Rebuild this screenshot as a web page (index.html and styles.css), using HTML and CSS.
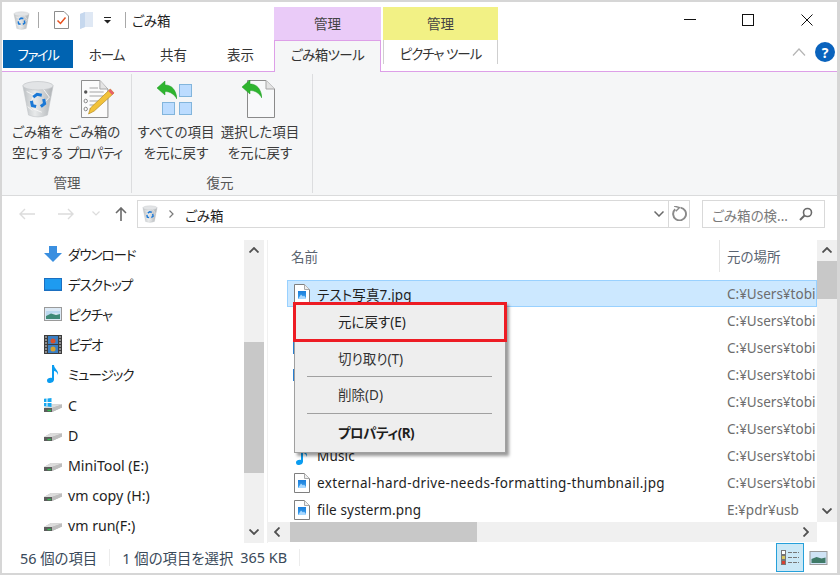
FILE: index.html
```html
<!DOCTYPE html>
<html lang="ja">
<head>
<meta charset="utf-8">
<title>ごみ箱</title>
<link rel="stylesheet" href="styles.css">
</head>
<body>
<svg class="defs" width="0" height="0">
  <defs>
    <linearGradient id="binfill" x1="0" y1="0" x2="1" y2="0">
      <stop offset="0" stop-color="#bcc0c3"/><stop offset=".4" stop-color="#e8eaeb"/><stop offset="1" stop-color="#aeb2b5"/>
    </linearGradient>
    <linearGradient id="picfill" x1="0" y1="0" x2="0" y2="1">
      <stop offset="0" stop-color="#1b7fdc"/><stop offset="1" stop-color="#3aa0ee"/>
    </linearGradient>
    <symbol id="bin" viewBox="0 0 36 40">
      <path d="M2 6 L34 6 L28 37 Q18 41 8 37 Z" fill="url(#binfill)" stroke="#bfc3c6" stroke-width=".6"/>
      <ellipse cx="18" cy="6" rx="16" ry="4.500" fill="#e2e4e6" stroke="#c4c7ca" stroke-width=".8"/>
      <path d="M6 12 L14 16 L10 24 M24 10 L30 18 L23 26 M12 30 L22 34 M7 28 L12 32" fill="none" stroke="#f6f6f6" stroke-width="1"/>
      <path d="M13 18 L17 15 L22 16 M24 20 L25 25 L21 28 M16 28 L12 27 L11 22" fill="none" stroke="#1a78d6" stroke-width="3.200"/>
    </symbol>
    <symbol id="green" viewBox="0 0 20 19">
      <path d="M0 7 L8 0 L8 4 C15 4 19 9 20 18 C17 13 13 10.500 8 10.500 L8 14 Z" fill="#2fb52f" stroke="#1f9a24" stroke-width=".5"/>
    </symbol>
    <symbol id="file" viewBox="0 0 16 20">
      <path d="M.5 .5 H10.500 L15.500 5.500 V19.500 H.5 Z" fill="#fff" stroke="#7f7f7f"/>
      <path d="M10.500 .5 V5.500 H15.500" fill="#eee" stroke="#a9a9a9"/>
      <rect x="4" y="7" width="8" height="8" fill="url(#picfill)"/>
      <path d="M4 15 L7 10.500 L9 12.500 L10 11.500 L12 14 V15 Z" fill="#a8d8ff"/>
    </symbol>
    <symbol id="drive" viewBox="0 0 18 9">
      <path d="M0 5 L7 1 L18 1.500 L18 4.500 L8 9 H0 Z" fill="#b4b4b4"/>
      <path d="M0 5 H8 V9 H0 Z" fill="#5c5c5c"/>
      <path d="M0 5 L7 1 L18 1.500 L8 5 Z" fill="#dcdcdc"/>
      <path d="M8 5 L18 1.500 V4.500 L8 9 Z" fill="#bdbdbd"/>
      <path d="M3.500 7.500 H7" stroke="#2fc050" stroke-width="1.400"/>
    </symbol>
    <symbol id="note" viewBox="0 0 12 18">
      <path d="M5 0 H7 C7 4 12 5 11 10 C10 7 8.500 6 7 6 V14.500 C7 17 4.500 18 2.500 18 C.5 18 0 16.500 0 15.500 C0 13.500 2.500 12.500 5 13 Z" fill="#0a9cf0"/>
    </symbol>
  </defs>
</svg>
<div class="window">
  <header class="topbar">
    <div class="qat">
      <svg class="qat-bin" width="17" height="19"><use href="#bin"/></svg>
      <span class="qat-sep"></span>
      <svg class="qat-check" width="15" height="18" viewBox="0 0 15 18"><path d="M.5 .5 H10 L14.500 5 V17.500 H.5 Z" fill="#fff" stroke="#8c8c8c"/><path d="M3.500 9.500 L6.500 12.500 L11.500 6.500" fill="none" stroke="#e8501e" stroke-width="1.500"/></svg>
      <svg class="qat-folder" width="13" height="18" viewBox="0 0 13 18"><path d="M0 3 L5 1 H13 V16 H5 L0 18 Z" fill="#dfe8f4"/><path d="M0 3 L5 1 V16 L0 18 Z" fill="#c6d8ee"/></svg>
      <svg class="qat-drop" width="7" height="7" viewBox="0 0 7 7"><path d="M0 0 H7 V1 H0 Z M0 3 H7 L3.500 6.500 Z" fill="#222"/></svg>
      <span class="qat-sep second"></span>
      <span class="title">ごみ箱</span>
    </div>
    <div class="ctx pink">管理</div>
    <div class="ctx yellow">管理</div>
    <div class="winbtns">
      <span class="winbtn"><svg width="12" height="12"><path d="M0 5.500 H12" stroke="#111"/></svg></span>
      <span class="winbtn"><svg width="12" height="12"><rect x=".5" y=".5" width="11" height="11" fill="none" stroke="#111"/></svg></span>
      <span class="winbtn"><svg width="12" height="12"><path d="M.5 .5 L11.500 11.500 M11.500 .5 L.5 11.500" stroke="#111"/></svg></span>
    </div>
  </header>

  <nav class="tabs">
    <span class="tab file-tab">ファイル</span>
    <span class="tab kana">ホーム</span>
    <span class="tab">共有</span>
    <span class="tab">表示</span>
    <span class="tab active">ごみ箱ツール</span>
    <span class="tab pic">ピクチャ ツール</span>
    <span class="tab-tools">
      <svg width="14" height="8" viewBox="0 0 14 8"><path d="M1 7.500 L7 1 L13 7.500" fill="none" stroke="#b5b5b5" stroke-width="1.200"/></svg>
      <span class="help">?</span>
    </span>
  </nav>

  <section class="ribbon">
    <div class="group g1">
      <div class="btns">
        <div class="rbtn"><svg class="ricon" width="34" height="38"><use href="#bin"/></svg><span>ごみ箱を<br>空にする</span></div>
        <div class="rbtn"><svg class="ricon prop" width="34" height="38" viewBox="0 0 36 38" preserveAspectRatio="none">
          <path d="M.5 .5 H20 L28.500 9 V37.500 H.5 Z" fill="#fbfbfb" stroke="#8a8a8a"/>
          <path d="M20 .5 V9 H28.500" fill="#e4e4e4" stroke="#a5a5a5"/>
          <circle cx="5" cy="12" r="1.800" fill="#555"/><circle cx="5" cy="21" r="1.800" fill="none" stroke="#888"/><circle cx="5" cy="29" r="1.800" fill="none" stroke="#888"/>
          <path d="M9 8 H18 M9 12 H24 M9 16 H24 M9 21 H20 M9 25 H18 M9 29 H14" stroke="#a0a0a0"/>
          <path d="M31 9 L35 13 L14 31 L8 34 L10 28 Z" fill="#f2c23a" stroke="#b58a20" stroke-width=".7"/>
          <path d="M31 9 L35 13 L33 15 L29 11 Z" fill="#e8606a"/>
        </svg><span>ごみ箱の<br><span class="tight">プロパティ</span></span></div>
      </div>
      <div class="glabel">管理</div>
    </div>
    <div class="group g2">
      <div class="btns">
        <div class="rbtn wide"><svg class="ricon all" width="36" height="38" viewBox="0 0 36 38">
          <rect x="22.500" y="4.500" width="12" height="12" fill="#bcdcff" stroke="#82b5dc"/>
          <rect x="5.500" y="22.500" width="12" height="12" fill="#bcdcff" stroke="#82b5dc"/>
          <rect x="22.500" y="22.500" width="12" height="12" fill="#bcdcff" stroke="#82b5dc"/>
          <use href="#green" x="0" y="1" width="20" height="19"/>
        </svg><span>すべての項目<br>を元に戻す</span></div>
        <div class="rbtn wide"><svg class="ricon one" width="34" height="38" viewBox="0 0 34 38">
          <path d="M5.500 .5 H24 L32.500 9 V37.500 H5.500 Z" fill="#f8f9fa" stroke="#8a8a8a"/>
          <path d="M24 .5 V9 H32.500" fill="#e4e4e4" stroke="#a5a5a5"/>
          <use href="#green" x="0" y="0" width="20" height="19"/>
        </svg><span>選択した項目<br>を元に戻す</span></div>
      </div>
      <div class="glabel">復元</div>
    </div>
  </section>

  <div class="addressrow">
    <svg class="nav-back" width="16" height="12" viewBox="0 0 16 12"><path d="M16 6 H1 M6 1 L1 6 L6 11" fill="none" stroke="#dcdcdc" stroke-width="1.400"/></svg>
    <svg class="nav-fwd" width="16" height="12" viewBox="0 0 16 12"><path d="M0 6 H15 M10 1 L15 6 L10 11" fill="none" stroke="#dcdcdc" stroke-width="1.400"/></svg>
    <svg class="nav-down" width="8" height="5" viewBox="0 0 8 5"><path d="M.5 .5 L4 4 L7.500 .5" fill="none" stroke="#dcdcdc" stroke-width="1.200"/></svg>
    <svg class="nav-up" width="12" height="14" viewBox="0 0 12 14"><path d="M6 14 V1 M1 6 L6 1 L11 6" fill="none" stroke="#6a6a6a" stroke-width="1.600"/></svg>
    <div class="addrbox">
      <svg class="addr-bin" width="16" height="18"><use href="#bin"/></svg>
      <svg class="addr-chev" width="5" height="8" viewBox="0 0 5 8"><path d="M.5 .5 L4 4 L.5 7.500" fill="none" stroke="#7a7a7a" stroke-width="1.200"/></svg>
      <span class="addr-text">ごみ箱</span>
      <svg class="addr-drop" width="10" height="6" viewBox="0 0 10 6"><path d="M.5 .5 L5 5 L9.500 .5" fill="none" stroke="#6a6a6a" stroke-width="1.500"/></svg>
      <span class="refresh"><svg width="15" height="15" viewBox="0 0 14 14"><path d="M8 1.500 A6 6 0 1 1 3 3" fill="none" stroke="#8a8a8a" stroke-width="1.800"/><path d="M2 0 L7 1.500 L3.500 5" fill="none" stroke="#8a8a8a" stroke-width="1.300"/></svg></span>
    </div>
    <div class="search">
      <span>ごみ箱の検...</span>
      <svg width="14" height="14" viewBox="0 0 14 14"><circle cx="8.500" cy="5.500" r="4" fill="none" stroke="#6a6a6a" stroke-width="1.600"/><path d="M5.500 8.500 L1 13" stroke="#6a6a6a" stroke-width="2"/></svg>
    </div>
  </div>

  <main class="main">
    <aside class="navpane">
      <ul class="navlist">
        <li class="jp"><svg width="18" height="16" viewBox="0 0 18 16"><path d="M5 0 H13 V7 H18 L9 16 L0 7 H5 Z" fill="#3a8fe0"/></svg>ダウンロード</li>
        <li class="jp"><svg width="18" height="13" viewBox="0 0 18 13"><rect width="18" height="13" fill="#1b6fc0"/><rect x="1" y="1" width="16" height="10.500" fill="#1e9bf0"/></svg>デスクトップ</li>
        <li class="jp"><svg width="18" height="14" viewBox="0 0 18 14"><rect x=".5" y=".5" width="17" height="13" fill="#dce9f5" stroke="#9a9a9a"/><path d="M2 4 H16 V7 L12 6 L6 7 L2 9 Z" fill="#bcd9f0"/><path d="M2 9 L7 6.500 L12 8 L16 7 V12 H2 Z" fill="#3f8a78"/></svg>ピクチャ</li>
        <li class="jp"><svg width="18" height="19" viewBox="0 0 18 19"><rect width="18" height="19" fill="#3d3d3d"/><rect x="4" y="1" width="10" height="8" fill="#3a7fc4"/><rect x="4" y="10" width="10" height="8" fill="#3a7fc4"/><circle cx="9" cy="6" r="2.500" fill="#d8502a"/><circle cx="9" cy="14" r="2.500" fill="#d8a02a"/><path d="M1 2 H3 M1 5 H3 M1 8 H3 M1 11 H3 M1 14 H3 M1 17 H3 M15 2 H17 M15 5 H17 M15 8 H17 M15 11 H17 M15 14 H17 M15 17 H17" stroke="#ddd"/></svg>ビデオ</li>
        <li class="jp"><svg class="note" width="12" height="18"><use href="#note"/></svg>ミュージック</li>
        <li class="drv"><span class="drive-c"><svg width="18" height="15" viewBox="0 0 18 15"><use href="#drive" x="0" y="5" width="18" height="9"/><path d="M-1 1 L2.500 .5 V4 H-1 Z M3.500 .4 L7.500 0 V4 H3.500 Z M-1 5 H2.500 V8.500 L-1 8 Z M3.500 5 H7.500 V9 L3.500 8.600 Z" fill="#18a8f0"/></svg></span>C</li>
        <li class="drv"><svg class="dsk" width="18" height="9"><use href="#drive"/></svg>D</li>
        <li class="drv"><svg class="dsk" width="18" height="9"><use href="#drive"/></svg>MiniTool (E:)</li>
        <li class="drv"><svg class="dsk" width="18" height="9"><use href="#drive"/></svg>vm copy (H:)</li>
        <li class="drv"><svg class="dsk" width="18" height="9"><use href="#drive"/></svg>vm run(F:)</li>
      </ul>
      <div class="vbar navbar">
        <svg class="arrow" width="10" height="6" viewBox="0 0 10 6"><path d="M.5 5.500 L5 1 L9.500 5.500" fill="none" stroke="#505050" stroke-width="1.800"/></svg>
        <div class="track"><i class="thumb"></i></div>
        <svg class="arrow" width="10" height="6" viewBox="0 0 10 6"><path d="M.5 .5 L5 5 L9.500 .5" fill="none" stroke="#505050" stroke-width="1.800"/></svg>
      </div>
    </aside>
    <section class="content">
      <div class="upper">
        <div class="listwrap">
          <div class="colhead"><span class="c-name">名前</span><span class="c-loc">元の場所</span></div>
          <ul class="rows">
            <li class="sel"><span class="name"><svg width="16" height="20"><use href="#file"/></svg>テスト写真7.jpg</span><span class="loc">C:¥Users¥tobi</span></li>
            <li><span class="name"></span><span class="loc">C:¥Users¥tobi</span></li>
            <li><span class="name"><i class="sliver"></i></span><span class="loc">C:¥Users¥tobi</span></li>
            <li><span class="name"><i class="sliver"></i></span><span class="loc">C:¥Users¥tobi</span></li>
            <li><span class="name"></span><span class="loc">C:¥Users¥tobi</span></li>
            <li><span class="name"></span><span class="loc">C:¥Users¥tobi</span></li>
            <li><span class="name"><svg width="16" height="18" viewBox="-2 0 16 18"><use href="#note" width="12" height="18"/></svg>Music</span><span class="loc">C:¥Users¥tobi</span></li>
            <li><span class="name long"><svg width="16" height="20"><use href="#file"/></svg>external-hard-drive-needs-formatting-thumbnail.jpg</span><span class="loc">C:¥Users¥tobi</span></li>
            <li><span class="name"><svg width="16" height="20"><use href="#file"/></svg>file systerm.png</span><span class="loc">E:¥pdr¥usb</span></li>
          </ul>
        </div>
        <div class="vbar listbar">
          <svg class="arrow" width="10" height="6" viewBox="0 0 10 6"><path d="M.5 5.500 L5 1 L9.500 5.500" fill="none" stroke="#505050" stroke-width="1.800"/></svg>
          <div class="track"><i class="thumb"></i></div>
          <svg class="arrow" width="10" height="6" viewBox="0 0 10 6"><path d="M.5 .5 L5 5 L9.500 .5" fill="none" stroke="#505050" stroke-width="1.800"/></svg>
        </div>
      </div>
      <div class="hbar">
        <svg class="harrow" width="6" height="10" viewBox="0 0 6 10"><path d="M5.500 .5 L1 5 L5.500 9.500" fill="none" stroke="#505050" stroke-width="1.800"/></svg>
        <div class="htrack"><i class="hthumb"></i></div>
        <svg class="harrow" width="6" height="10" viewBox="0 0 6 10"><path d="M.5 .5 L5 5 L.5 9.500" fill="none" stroke="#505050" stroke-width="1.800"/></svg>
      </div>
    </section>
  </main>

  <footer class="status">
    <span class="s1">56 個の項目</span>
    <span class="s-sep"></span>
    <span class="s2">1 個の項目を選択</span>
    <span class="s3">365 KB</span>
    <span class="s-sep"></span>
    <span class="views">
      <span class="view on"><svg width="18" height="15" viewBox="0 0 18 15"><path d="M7 2.500 H18 M7 7.500 H18 M7 12.500 H18" stroke="#777" stroke-dasharray="4 1"/><rect x=".5" y=".5" width="4" height="4" fill="#fff" stroke="#777"/><rect x=".5" y="5.500" width="4" height="4" fill="#d8c860" stroke="#777"/><rect x=".5" y="10.500" width="4" height="4" fill="#d84030" stroke="#777"/></svg></span>
      <span class="view"><svg width="19" height="14" viewBox="0 0 18 14"><rect x=".5" y=".5" width="17" height="13" fill="#cfe3f5" stroke="#9a9a9a"/><path d="M2 8 L7 6 L12 7.500 L16 6.500 V12 H2 Z" fill="#3f7a68"/></svg></span>
    </span>
  </footer>

  <div class="menu">
    <div class="mi first">元に戻す(E)</div>
    <div class="mi second">切り取り(T)</div>
    <hr>
    <div class="mi">削除(D)</div>
    <hr>
    <div class="mi strong">プロパティ(R)</div>
  </div>
</div>
</body>
</html>
```

FILE: styles.css
```css
* { box-sizing: border-box; }
html, body { margin: 0; padding: 0; }
body {
  font-family: "Noto Sans", "Noto Sans CJK JP", sans-serif;
  font-feature-settings: "palt";
  font-size: 13px;
  color: #1e1e1e;
  background: #fff;
}
svg { display: block; flex: none; }
.defs { position: absolute; }
ul { list-style: none; margin: 0; padding: 0; }

.window {
  position: relative;
  width: 840px;
  height: 575px;
  display: flex;
  flex-direction: column;
  background: #fff;
  border: solid #d6d6d6;
  border-width: 2px 3px 2px 2px;
  overflow: hidden;
}

/* title bar */
.topbar { height: 38px; display: flex; flex: none; }
.qat { width: 272px; display: flex; align-items: center; padding: 0 0 2px 11px; }
.qat-sep { width: 1px; height: 16px; background: #a8a8a8; margin-left: 8px; }
.qat-check { margin-left: 15px; }
.qat-folder { margin-left: 11px; }
.qat-drop { margin-left: 11px; }
.qat-sep.second { margin-left: 14px; }
.title { margin-left: 6px; font-size: 13.5px; }
.ctx {
  align-self: flex-end;
  height: 33px;
  display: flex;
  align-items: center;
  justify-content: center;
  font-size: 13.5px;
  color: #444;
  padding-bottom: 2px;
}
.pink { width: 107px; background: #eacbf8; margin-right: 2px; }
.yellow { width: 115px; background: #f2f185; }
.winbtns { margin-left: auto; display: flex; margin-right: 1px; }
.winbtn { width: 58.500px; display: flex; align-items: center; justify-content: center; padding-bottom: 2px; }

/* tabs */
.tabs {
  height: 32px;
  flex: none;
  display: flex;
  padding-left: 1px;
  border-bottom: 1px solid #dd9fe8;
  font-size: 13.500px;
}
.tab { width: 67px; height: 31px; display: flex; align-items: center; justify-content: center; padding-bottom: 4px; color: #333; }
.tab.kana { letter-spacing: -1px; }
.file-tab { width: 70px; height: 28px; background: #0063b1; color: #fff; padding-bottom: 1px; letter-spacing: -1.500px; }
.tab.active {
  width: 107px;
  height: 32px;
  margin-bottom: -1px;
  background: #f5f6f7;
  border: 1px solid #dd9fe8;
  border-bottom: 0;
  padding-bottom: 5px;
  position: relative;
  letter-spacing: -.6px;
}
.tab.pic {
  width: 115px;
  height: 24px;
  margin-left: 2px;
  padding-bottom: 0;
  padding-top: 1px;
  border: solid #cfcfcf;
  border-width: 0 1px;
  white-space: nowrap;
  letter-spacing: -1px;
}
.tab-tools { margin-left: auto; margin-right: 2px; display: flex; align-items: center; gap: 9px; padding-bottom: 7px; }
.help {
  width: 20px;
  height: 20px;
  border-radius: 50%;
  background: #0a63bd;
  color: #fff;
  font-weight: 700;
  font-size: 14px;
  display: flex;
  align-items: center;
  justify-content: center;
}

/* ribbon */
.ribbon {
  height: 124px;
  flex: none;
  display: flex;
  background: #f5f6f7;
  border-bottom: 1px solid #dadbdc;
  color: #3c3c3c;
  padding-top: 2px;
}
.group { height: 119px; display: flex; flex-direction: column; border-right: 1px solid #dcdddf; }
.g1 { width: 130px; padding-left: 7px; }
.g2 { width: 181px; padding-left: 2px; }
.btns { display: flex; flex: 1; }
.rbtn { width: 57px; display: flex; flex-direction: column; align-items: center; text-align: center; line-height: 21px; font-size: 13.500px; white-space: nowrap; padding-top: 6px; }
.rbtn.wide { width: 84px; }
.ricon { margin-bottom: 4px; }
.ricon.prop { margin-left: 7px; }
.ricon.all { margin-left: -3px; }
.ricon.one { margin-left: -2px; }
.tight { letter-spacing: -1px; }
.glabel { text-align: center; height: 21px; line-height: 21px; margin-bottom: -1px; padding-right: 6px; font-size: 13.500px; color: #555; }

/* address row */
.addressrow { height: 44px; flex: none; display: flex; align-items: center; padding-bottom: 9px; }
.nav-back { margin-left: 17px; }
.nav-fwd { margin-left: 23px; }
.nav-down { margin-left: 18px; }
.nav-up { margin-left: 15px; }
.addrbox {
  width: 553px;
  height: 28px;
  margin-left: 10px;
  border: 1px solid #d9d9d9;
  display: flex;
  align-items: center;
  padding-left: 4px;
}
.addr-chev { margin-left: 11px; }
.addr-text { margin-left: 11px; font-size: 13.500px; padding-top: 2px; }
.addr-drop { margin-left: auto; margin-right: 4px; }
.refresh { width: 21px; height: 26px; border-left: 1px solid #d9d9d9; display: flex; align-items: center; justify-content: center; }
.search {
  width: 123px;
  height: 28px;
  margin-left: 12px;
  border: 1px solid #d9d9d9;
  display: flex;
  align-items: center;
  justify-content: space-between;
  padding: 0 11px 0 9px;
  color: #7a7a7a;
  font-size: 13.500px;
}
.search span { padding-top: 2px; }

/* main */
.main { height: 303px; flex: none; display: flex; }
.navpane { width: 262px; flex: none; display: flex; }
.navlist { width: 242px; height: 303px; overflow: hidden; }
.navlist li {
  height: 30px;
  display: flex;
  align-items: center;
  padding-left: 42px;
  font-size: 13.500px;
  white-space: nowrap;
}
.navlist li.jp { letter-spacing: -1px; padding-bottom: 2px; }
.navlist li.jp svg { margin-right: 6px; }
.navlist li.drv { font-size: 14.200px; }
.navlist li .dsk, .drive-c { margin-right: 6px; }
.navlist li .dsk { margin-top: 2px; }
.navlist li.jp .note { margin-left: 3px; margin-right: 9px; }
.vbar { width: 20px; background: #f0f0f0; display: flex; flex-direction: column; align-items: center; flex: none; }
.vbar .arrow { margin: 7px 0 8px; }
.track { flex: 1; width: 100%; position: relative; }
.thumb { display: block; width: 100%; background: #c8c8c8; }
.navbar .track { padding-top: 81px; }
.navbar .thumb { height: 131px; }
.listbar { height: 282px; }
.listbar .track { padding-top: 0; }
.listbar .thumb { height: 38px; }

.content { flex: 1; min-width: 0; border-left: 1px solid #f0f0f0; margin-left: 3px; display: flex; flex-direction: column; }
.upper { display: flex; height: 282px; flex: none; }
.listwrap { flex: 1; min-width: 0; overflow: hidden; }
.colhead { height: 32px; display: flex; align-items: center; color: #5a6470; font-size: 13.500px; }
.c-name { width: 451px; padding-left: 23px; height: 100%; display: flex; align-items: center; }
.c-loc { height: 100%; border-left: 1px solid #e5e5e5; padding-left: 7px; display: flex; align-items: center; white-space: nowrap; }
.rows { margin: 8px 0 0 19px; }
.rows li { height: 27px; display: flex; align-items: center; white-space: nowrap; border: 1px solid transparent; font-size: 13.500px; }
.rows li.sel { background: #cce8ff; border-color: #99d1ff; }
.name { width: 432px; display: flex; align-items: center; gap: 7px; padding-left: 6px; letter-spacing: .15px; }
.name.long { letter-spacing: .34px; }
.loc { color: #6d6d6d; padding-left: 7px; padding-top: 1px; }
.sliver { display: block; width: 2px; height: 12px; background: #2a7fd0; margin-left: -1px; }
.hbar { height: 20px; width: 549px; background: #f0f0f0; display: flex; align-items: center; padding: 0 8px 0 6px; gap: 7px; flex: none; }
.htrack { flex: 1; height: 100%; padding-left: 3px; }
.hthumb { display: block; width: 187px; height: 100%; background: #c8c8c8; }

/* status */
.status { flex: 1; display: flex; align-items: center; padding: 0 0 1px 18px; font-size: 14.400px; color: #3a4a5a; }
.s-sep { width: 1px; height: 17px; background: #ececec; margin: 0 12px; }
.s3 { margin-left: 7px; }
.views { margin-left: auto; display: flex; margin-right: 5px; height: 100%; align-items: center; }
.view { width: 28px; height: 100%; display: flex; align-items: center; justify-content: center; }
.view.on { background: #cbe8f6; border: 1px solid #26a0da; }

/* context menu */
.menu {
  position: absolute;
  left: 292px;
  top: 300px;
  width: 212px;
  padding: 0 0 1px;
  background: #eeeeee;
  border: 1px solid #a0a0a0;
  box-shadow: 3px 3px 3px rgba(0, 0, 0, .4);
  font-size: 13.500px;
}
.mi { height: 36px; display: flex; align-items: center; padding-left: 43px; padding-bottom: 2px; color: #333; }
.mi.first {
  height: 40px;
  margin: -1px -2px 0 -2px;
  padding-left: 42px;
  border: 3px solid #ed1c24;
  color: #222;
}
.mi.second { height: 34px; }
.mi.strong { font-weight: 700; color: #1e1e1e; height: 37px; letter-spacing: -.5px; }
.menu hr { margin: 0 13px 0 12px; border: 0; height: 1px; background: #a0a0a0; }
```
